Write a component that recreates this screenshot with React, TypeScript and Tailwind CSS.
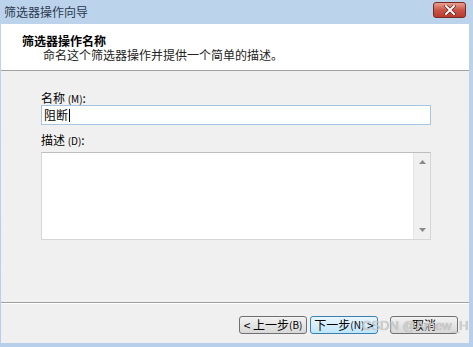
export default function App() {
    const font = { fontFamily: '"Noto Sans CJK SC", "Liberation Sans", sans-serif' };

    return (
        <div
            className="relative w-[473px] h-[347px] bg-gradient-to-b from-[#bcd3ec] to-[#b7cfea] flex flex-col text-[12px] text-black overflow-hidden"
            style={font}
        >
            {/* title bar */}
            <div className="h-[24px] flex items-center justify-between pl-[4px] pr-[7px]">
                <div className="text-[12px] leading-[14px] text-[#2a3a4e]">筛选器操作向导</div>
                <div className="w-[33px] h-[16px] mb-[4px] rounded-[3px] border border-[#7b2a22] bg-gradient-to-b from-[#e8a090] via-[#c9554a] to-[#b83a2e] flex items-center justify-center">
                    <svg width="12" height="10" viewBox="0 0 12 10">
                        <path d="M2 1 L10 9 M10 1 L2 9" stroke="#5a1a14" strokeWidth="3.2" strokeLinecap="square" />
                        <path d="M2 1 L10 9 M10 1 L2 9" stroke="#ffffff" strokeWidth="2" strokeLinecap="square" />
                    </svg>
                </div>
            </div>

            <div className="flex-1 ml-[1px] mr-[4px] mb-[4px] flex flex-col bg-[#f0f0f0]">
                {/* header */}
                <div className="h-[47px] bg-white border-b border-[#a0a0a0] pt-[10px] pl-[21px]">
                    <div className="text-[12px] leading-[13px] font-bold">筛选器操作名称</div>
                    <div className="text-[12px] leading-[13px] mt-[1px] pl-[21px] text-[#222]">
                        命名这个筛选器操作并提供一个简单的描述。
                    </div>
                </div>

                {/* body */}
                <div className="flex-1 pt-[20px] pl-[40px] pr-[38px]">
                    <div className="h-[14px] leading-[14px]">
                        名称 <span className="text-[10px]">(M)</span>:
                    </div>
                    <div className="h-[20px] bg-white border border-[#a7c4e0] flex items-center pl-[2px] leading-[14px]">
                        阻断<span className="w-[1px] h-[13px] bg-black ml-[1px]"></span>
                    </div>
                    <div className="h-[14px] leading-[14px] mt-[8px]">
                        描述 <span className="text-[10px]">(D)</span>:
                    </div>
                    <div className="h-[88px] mt-[5px] bg-white border border-[#d6d6d6] border-t-[#bdbdbd] flex justify-end">
                        <div className="w-[17px] bg-[#f0f0f0] border-l border-[#e6e6e6] flex flex-col items-center justify-between py-[7px]">
                            <svg width="7" height="4" viewBox="0 0 7 4">
                                <path d="M0 4 L3.5 0 L7 4 Z" fill="#8a8a8a" />
                            </svg>
                            <svg width="7" height="4" viewBox="0 0 7 4">
                                <path d="M0 0 L3.5 4 L7 0 Z" fill="#8a8a8a" />
                            </svg>
                        </div>
                    </div>
                </div>

                {/* footer */}
                <div className="h-[41px] border-t border-[#a0a0a0] shadow-[inset_0_1px_0_#ffffff] flex items-start justify-end pt-[13px] pr-[11px]">
                    <button className="w-[68px] h-[18px] rounded-[3px] border border-[#707070] bg-gradient-to-b from-[#f2f2f2] to-[#d8d8d8] text-[12px] leading-[14px] flex items-center justify-center">
                        &lt; 上一步 <span className="text-[10px]">(B)</span>
                    </button>
                    <button className="w-[68px] h-[18px] ml-[3px] rounded-[3px] border border-[#3c7fb1] bg-gradient-to-b from-[#eaf6fd] to-[#bee6fd] text-[12px] leading-[14px] flex items-center justify-center">
                        下一步 <span className="text-[10px]">(N)</span>&nbsp;&gt;
                    </button>
                    <button className="w-[68px] h-[18px] ml-[12px] rounded-[3px] border border-[#707070] bg-gradient-to-b from-[#f2f2f2] to-[#d8d8d8] text-[12px] leading-[14px] flex items-center justify-center">
                        取消
                    </button>
                </div>
            </div>

            {/* watermark */}
            <div
                className="absolute left-[362px] top-[319px] text-[13px] leading-[14px] text-[#d0d0d0]"
                style={{ fontFamily: '"Liberation Sans", sans-serif', textShadow: '0 0 1px #999' }}
            >
                CSDN @Amew_H
            </div>
        </div>
    );
}
